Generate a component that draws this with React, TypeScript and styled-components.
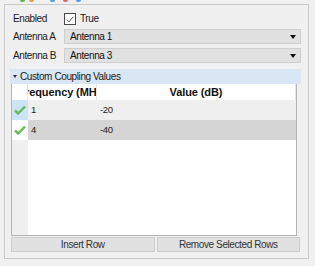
import styled, { createGlobalStyle } from "styled-components";

const GlobalStyle = createGlobalStyle`
  html, body {
    margin: 0;
    padding: 0;
    background: #f0f0f0;
  }
  body {
    font-family: "Liberation Sans", Arial, sans-serif;
    font-size: 10px;
    letter-spacing: -0.4px;
    color: #000;
  }
`;

const Page = styled.div`
  width: 315px;
  height: 266px;
  overflow: hidden;
  display: flex;
  flex-direction: column;
`;

const ToolStrip = styled.div`
  height: 4px;
  overflow: hidden;
  display: flex;
  gap: 4px;
  padding-left: 20px;
  align-items: flex-start;
`;

const ToolDot = styled.span<{ color: string; space?: number }>`
  width: 5px;
  height: 2px;
  margin-left: ${(p) => p.space ?? 0}px;
  background: ${(p) => p.color};
  border-radius: 0 0 2px 2px;
`;

const GroupBox = styled.div`
  margin-left: 4px;
  width: 305px;
  height: 255px;
  box-sizing: border-box;
  border: 1px solid #c9c9c9;
  background: #f0f0f0;
  padding: 8px 7px 0 5px;
  display: flex;
  flex-direction: column;
`;

const Form = styled.div`
  display: grid;
  grid-template-columns: 51px 1fr;
  row-gap: 4px;
  padding-left: 3px;
  align-items: center;
`;

const Label = styled.span`
  line-height: 12px;
  color: #1a1a1a;
  white-space: nowrap;
`;

const CheckRow = styled.div`
  display: flex;
  align-items: center;
  gap: 4px;
  height: 12px;
`;

const CheckBox = styled.span`
  width: 10px;
  height: 10px;
  border: 1px solid #4a4a4a;
  background: #fff;
  display: flex;
  align-items: center;
  justify-content: center;
`;

const Combo = styled.div`
  height: 15px;
  box-sizing: border-box;
  border: 1px solid #cfcfcf;
  background: #e1e1e1;
  display: flex;
  align-items: center;
  justify-content: space-between;
  padding: 0 4px 0 5px;
  color: #111;
  white-space: nowrap;
`;

const Arrow = styled.span`
  width: 0;
  height: 0;
  border-left: 3px solid transparent;
  border-right: 3px solid transparent;
  border-top: 4px solid #111;
`;

const Section = styled.div`
  margin-top: 6px;
  display: flex;
  flex-direction: column;
`;

const SectionHeader = styled.div`
  height: 15px;
  background: #d9e6f3;
  display: flex;
  align-items: center;
  gap: 3px;
  padding-left: 3px;
  color: #1a1a1a;
  white-space: nowrap;
`;

const SmallTriangle = styled.span`
  width: 0;
  height: 0;
  border-left: 2.5px solid transparent;
  border-right: 2.5px solid transparent;
  border-top: 3px solid #333;
`;

const Table = styled.div`
  margin: 0 4px 0 1px;
  height: 152px;
  box-sizing: border-box;
  border: 1px solid #b4b4b4;
  border-top: none;
  background: #fff;
  display: grid;
  grid-template-columns: 16px 69px 1fr;
  grid-template-rows: 16px 20px 20px 1fr;
`;

const HeadCell = styled.div`
  background: #fff;
  font-weight: bold;
  font-size: 11px;
  letter-spacing: -0.1px;
  display: flex;
  align-items: center;
  justify-content: center;
  overflow: hidden;
  white-space: nowrap;
  border-right: 1px solid #e6e6e6;
  color: #111;
`;

const RowHead = styled.div<{ selected?: boolean }>`
  background: ${(p) => (p.selected ? "#cde4f7" : "#fff")};
  display: flex;
  align-items: center;
  justify-content: center;
`;

const Cell = styled.div<{ shade: string }>`
  background: ${(p) => p.shade};
  display: flex;
  align-items: center;
  padding-left: 3px;
  padding-bottom: 1px;
  font-size: 9.5px;
  color: #222;
`;

const EmptyHead = styled.div`
  background: #f0f0f0;
`;

const EmptyBody = styled.div`
  grid-column: span 2;
  background: #fff;
`;

const ButtonRow = styled.div`
  margin: 1px 1px 0 1px;
  display: grid;
  grid-template-columns: 1fr 1fr;
  gap: 2px;
`;

const Button = styled.div`
  height: 15px;
  box-sizing: border-box;
  border: 1px solid #cdcdcd;
  background: #e1e1e1;
  display: flex;
  align-items: center;
  justify-content: center;
  color: #333;
  white-space: nowrap;
`;

const Check = () => (
  <svg width="12" height="10" viewBox="0 0 12 10">
    <path d="M1 5.5 L4.2 8.5 L11 1.5" stroke="#66bb55" strokeWidth="2.4" fill="none" strokeLinejoin="round" />
  </svg>
);

const rows = [
  { freq: "1", value: "-20", shade: "#efefef", selected: true },
  { freq: "4", value: "-40", shade: "#d5d5d5", selected: false },
];

export default function App() {
  return (
    <Page>
      <GlobalStyle />
      <ToolStrip>
        <ToolDot color="#6ab04c" />
        <ToolDot color="#e8a04a" />
        <ToolDot color="#5b9bd5" space={12} />
        <ToolDot color="#e06666" space={4} />
        <ToolDot color="#5b9bd5" space={4} />
      </ToolStrip>
      <GroupBox>
        <Form>
          <Label>Enabled</Label>
          <CheckRow>
            <CheckBox>
              <svg width="8" height="7" viewBox="0 0 8 7">
                <path d="M0.8 3.6 L3 5.8 L7.2 0.8" stroke="#555" strokeWidth="1" fill="none" />
              </svg>
            </CheckBox>
            <Label>True</Label>
          </CheckRow>
          <Label>Antenna A</Label>
          <Combo>
            Antenna 1
            <Arrow />
          </Combo>
          <Label>Antenna B</Label>
          <Combo>
            Antenna 3
            <Arrow />
          </Combo>
        </Form>
        <Section>
          <SectionHeader>
            <SmallTriangle />
            Custom Coupling Values
          </SectionHeader>
          <Table>
            <HeadCell />
            <HeadCell>Frequency (MHz)</HeadCell>
            <HeadCell>Value (dB)</HeadCell>
            {rows.map((r) => (
              <>
                <RowHead key={r.freq + "h"} selected={r.selected}>
                  <Check />
                </RowHead>
                <Cell key={r.freq + "f"} shade={r.shade}>{r.freq}</Cell>
                <Cell key={r.freq + "v"} shade={r.shade}>{r.value}</Cell>
              </>
            ))}
            <EmptyHead />
            <EmptyBody />
          </Table>
          <ButtonRow>
            <Button>Insert Row</Button>
            <Button>Remove Selected Rows</Button>
          </ButtonRow>
        </Section>
      </GroupBox>
    </Page>
  );
}
